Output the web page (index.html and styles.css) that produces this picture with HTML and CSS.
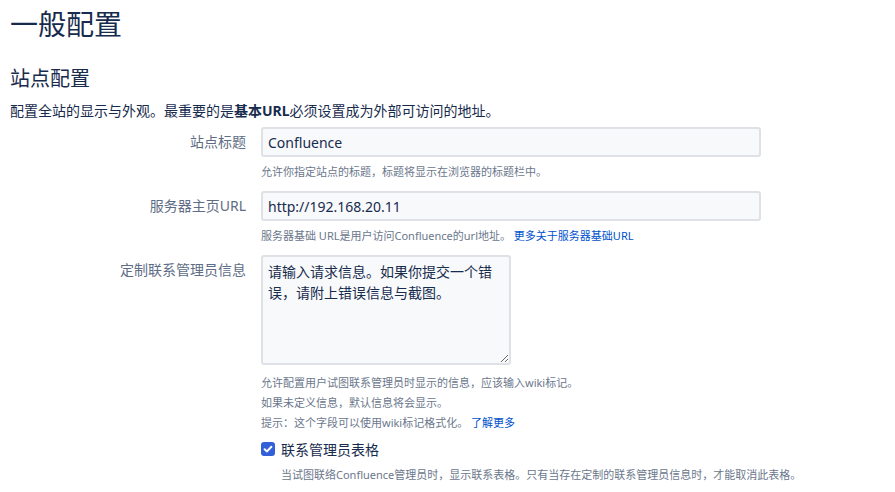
FILE: index.html
```html
<!DOCTYPE html>
<html lang="zh-CN">
<head>
<meta charset="utf-8">
<title>一般配置</title>
<link rel="stylesheet" href="styles.css">
</head>
<body>
<div class="page">
  <h1 class="title">一般配置</h1>
  <h2 class="subtitle">站点配置</h2>
  <p class="desc">配置全站的显示与外观。最重要的是<strong>基本URL</strong>必须设置成为外部可访问的地址。</p>

  <div class="row">
    <label class="label">站点标题</label>
    <div class="field">
      <input class="text" type="text" value="Confluence">
      <div class="help">允许你指定站点的标题，标题将显示在浏览器的标题栏中。</div>
    </div>
  </div>

  <div class="row">
    <label class="label">服务器主页URL</label>
    <div class="field">
      <input class="text" type="text" value="http://192.168.20.11">
      <div class="help">服务器基础 URL是用户访问Confluence的url地址。 <a class="link" href="#">更多关于服务器基础URL</a></div>
    </div>
  </div>

  <div class="row">
    <label class="label">定制联系管理员信息</label>
    <div class="field">
      <textarea class="area">请输入请求信息。如果你提交一个错误，请附上错误信息与截图。</textarea>
      <div class="help-block">
        <div class="help-line">允许配置用户试图联系管理员时显示的信息，应该输入wiki标记。</div>
        <div class="help-line">如果未定义信息，默认信息将会显示。</div>
        <div class="help-line">提示：这个字段可以使用wiki标记格式化。 <a class="link" href="#">了解更多</a></div>
      </div>
      <div class="check-row">
        <span class="checkbox"><svg width="14" height="14" viewBox="0 0 14 14"><rect x="0" y="0" width="14" height="14" rx="3" fill="#3360d6"/><path d="M3.6 7.2 L6 9.4 L10.4 4.8" fill="none" stroke="#fff" stroke-width="2" stroke-linecap="round" stroke-linejoin="round"/></svg></span>
        <span class="check-label">联系管理员表格</span>
      </div>
      <div class="check-desc">当试图联络Confluence管理员时，显示联系表格。只有当存在定制的联系管理员信息时，才能取消此表格。</div>
    </div>
  </div>
</div>
</body>
</html>
```

FILE: styles.css
```css
* { box-sizing: border-box; }
html, body { margin: 0; padding: 0; background: #fff; }
body {
  font-family: "Noto Sans", "Noto Sans CJK SC", sans-serif;
  color: #172b4d;
  font-size: 14px;
}
.page { padding: 8px 0 0 10px; }
.title {
  margin: 0;
  font-size: 28px;
  line-height: 32px;
  font-weight: 400;
  color: #172b4d;
}
.subtitle {
  margin: 27px 0 0;
  font-size: 20px;
  line-height: 24px;
  font-weight: 400;
  color: #172b4d;
}
.desc {
  margin: 10px 0 6px;
  font-size: 14px;
  line-height: 20px;
}
.desc strong { font-weight: 700; }
.row {
  display: flex;
  align-items: flex-start;
  gap: 15px;
  margin-bottom: 11px;
}
.label {
  width: 236px;
  flex: none;
  text-align: right;
  line-height: 30px;
  font-size: 14px;
  color: #5e6c84;
}
.field { flex: none; width: 500px; }
.text {
  display: block;
  width: 500px;
  height: 30px;
  border: 2px solid #dfe1e6;
  border-radius: 3px;
  background: #f8f9fb;
  padding: 0 5px;
  font-family: inherit;
  font-size: 14px;
  color: #172b4d;
  outline: none;
}
.help {
  margin-top: 7px;
  font-size: 11px;
  line-height: 16px;
  color: #6b778c;
  white-space: nowrap;
}
.link { color: #0052cc; text-decoration: none; }
.area {
  display: block;
  width: 250px;
  height: 110px;
  border: 2px solid #dfe1e6;
  border-radius: 3px;
  background: #f8f9fb;
  padding: 4px 5px;
  font-family: inherit;
  font-size: 14px;
  line-height: 21px;
  color: #172b4d;
  resize: both;
  outline: none;
}
.help-block { margin-top: 8px; }
.help-line {
  font-size: 11px;
  line-height: 20px;
  color: #6b778c;
  white-space: nowrap;
}
.check-row {
  display: flex;
  align-items: center;
  gap: 6px;
  margin-top: 6px;
  height: 20px;
}
.checkbox { display: flex; width: 14px; height: 14px; }
.check-label { font-size: 14px; color: #172b4d; }
.check-desc {
  margin-top: 8px;
  padding-left: 20px;
  font-size: 11px;
  line-height: 16px;
  color: #6b778c;
  white-space: nowrap;
}
```
